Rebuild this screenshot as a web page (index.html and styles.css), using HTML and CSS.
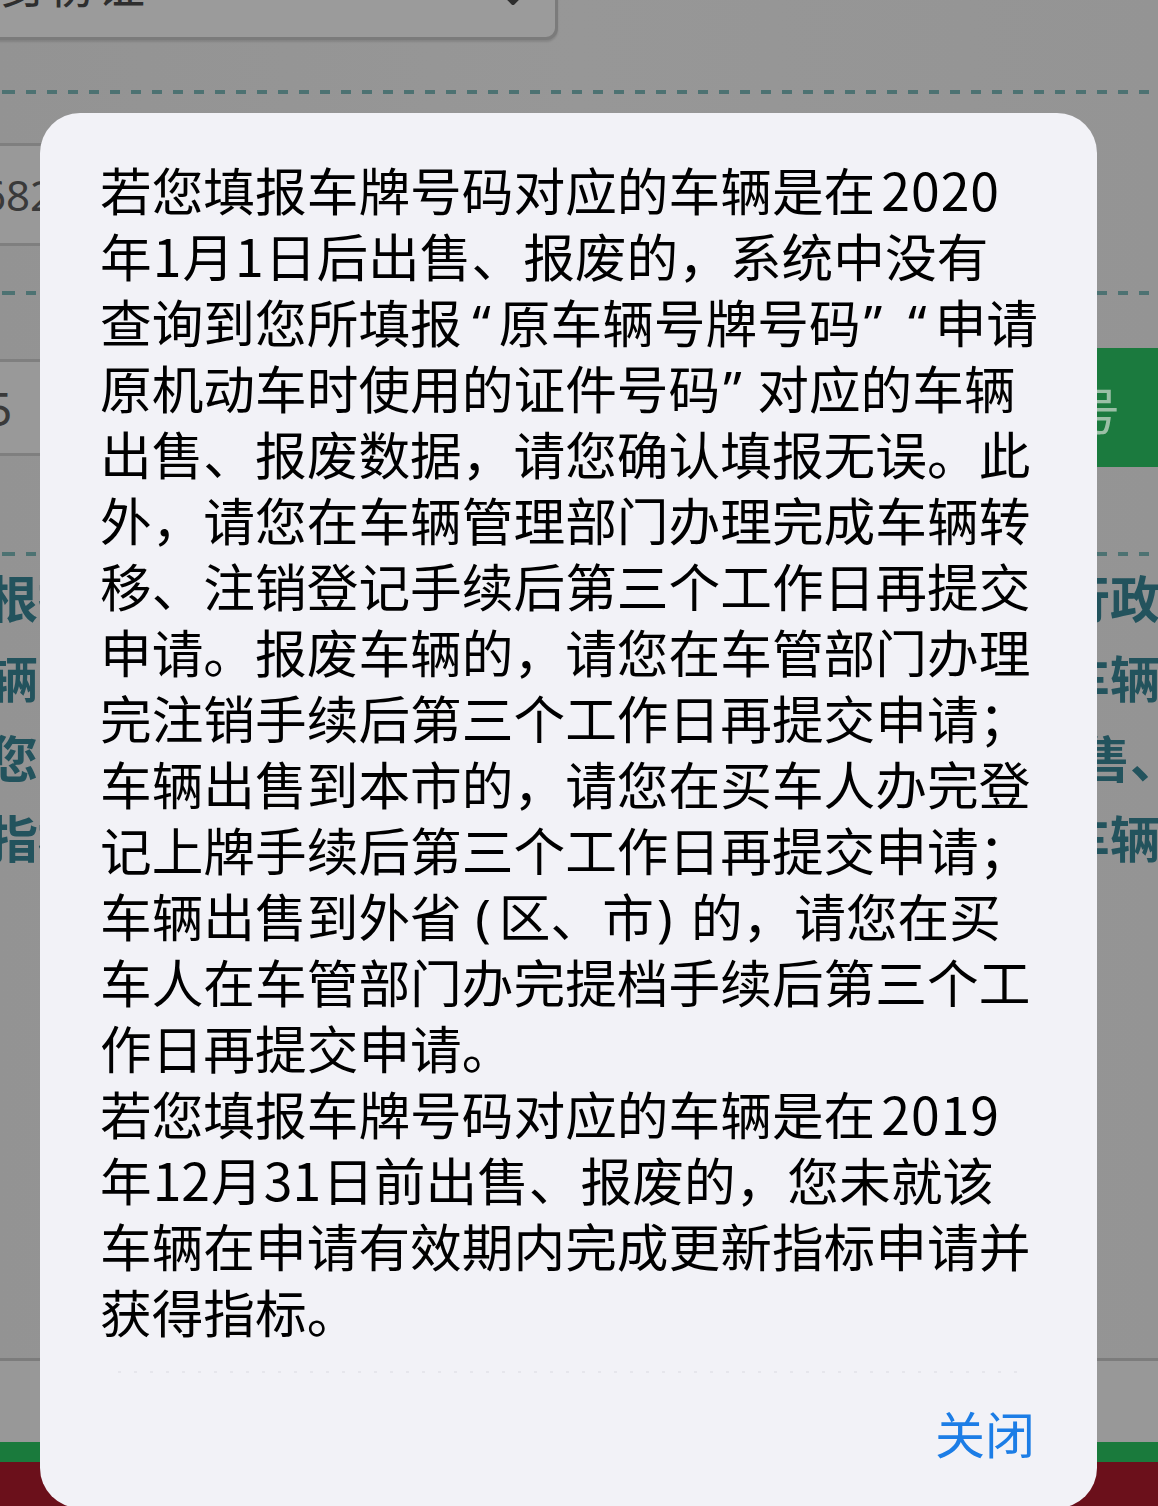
FILE: index.html
```html
<!DOCTYPE html>
<html lang="zh-CN">
<head>
<meta charset="utf-8">
<title>提示</title>
<link rel="stylesheet" href="styles.css">
</head>
<body>
<div class="page">
  <div class="sel-row">
    <div class="select">
      <span class="sel-text">身份证</span>
      <svg class="chev" width="24" height="14" viewBox="0 0 24 14"><path d="M3 2 L12 11 L21 2" fill="none" stroke="#2e2e2e" stroke-width="4" stroke-linecap="round" stroke-linejoin="round"/></svg>
    </div>
  </div>
  <div class="dash dash-a"></div>
  <div class="input input-a"><span class="in-text">5682</span></div>
  <div class="dash dash-b"></div>
  <div class="row-b">
    <div class="input input-b"><span class="in-text b">5</span></div>
    <div class="green-btn">号</div>
  </div>
  <div class="dash dash-c"></div>
  <div class="notes">
    <div class="note"><span>根据</span><span>行政</span></div>
    <div class="note"><span>辆</span><span>车辆</span></div>
    <div class="note r3"><span>您</span><span>出售、</span></div>
    <div class="note"><span>指标</span><span>车辆</span></div>
  </div>
  <div class="bottom">
    <div class="b-line"></div>
    <div class="b-grey"></div>
    <div class="b-green"></div>
    <div class="b-red"></div>
  </div>
</div>

<div class="modal">
  <div class="msg">
    <p>若您填报车牌号码对应的车辆是在<span class="yr">2020</span><br>年<span class="n">1</span>月<span class="n">1</span>日后出售、报废的，系统中没有<br>查询到您所填报<span class="q ql">“</span>原车辆号牌号码<span class="q qr">”</span><span class="q ql">“</span>申请<br>原机动车时使用的证件号码<span class="q qr">”</span>对应的车辆<br>出售、报废数据，请您确认填报无误。此<br>外，请您在车辆管理部门办理完成车辆转<br>移、注销登记手续后第三个工作日再提交<br>申请。报废车辆的，请您在车管部门办理<br>完注销手续后第三个工作日再提交申请；<br>车辆出售到本市的，请您在买车人办完登<br>记上牌手续后第三个工作日再提交申请；<br>车辆出售到外省<span class="q ql">(</span>区、市<span class="q qr">)</span>的，请您在买<br>车人在车管部门办完提档手续后第三个工<br>作日再提交申请。</p>
    <p>若您填报车牌号码对应的车辆是在<span class="yr">2019</span><br>年<span class="n">12</span>月<span class="n">31</span>日前出售、报废的，您未就该<br>车辆在申请有效期内完成更新指标申请并<br>获得指标。</p>
  </div>
  <div class="sep"></div>
  <div class="actions"><span class="close-btn">关闭</span></div>
</div>
</body>
</html>
```

FILE: styles.css
```css
html, body {
  margin: 0;
  padding: 0;
}
body {
  width: 1158px;
  height: 1506px;
  overflow: hidden;
  position: relative;
  background: #959595;
  font-family: "Noto Sans CJK SC", sans-serif;
}

/* ---------- dimmed page behind the dialog ---------- */
.page {
  height: 1506px;
  display: flex;
  flex-direction: column;
  background: linear-gradient(90deg, #939393 0%, #979797 50%, #949494 100%);
}
.sel-row {
  height: 40px;
  flex-shrink: 0;
}
.select {
  margin-top: -60px;
  margin-left: -12px;
  width: 570px;
  height: 100px;
  box-sizing: border-box;
  border: 3px solid #7b7b7b;
  border-radius: 12px;
  background: #9b9b9b;
  display: flex;
  align-items: flex-end;
  justify-content: space-between;
  padding: 0 30px 31px 10px;
  box-shadow: 0 2px 2px rgba(0,0,0,0.12);
}
.sel-text {
  font-size: 48px;
  line-height: 48px;
  color: #2e2e2e;
}
.chev {
  display: block;
}
.dash {
  height: 4px;
  flex-shrink: 0;
  background: repeating-linear-gradient(90deg, #4d7272 0 10px, transparent 10px 21px);
  background-position: 5px 0;
}
.dash-a { margin-top: 50px; }
.input {
  box-sizing: border-box;
  border-top: 3px solid #7f7f7f;
  border-bottom: 3px solid #7f7f7f;
  background: #999999;
  display: flex;
  align-items: center;
  flex-shrink: 0;
}
.input-a {
  margin-top: 49px;
  height: 103px;
  width: 1050px;
}
.in-text {
  margin-left: -42px;
  font-size: 42px;
  color: #3a3a3a;
  font-family: "Noto Sans", sans-serif;
}
.in-text.b {
  margin-left: -14px;
  font-size: 46px;
}
.dash-b { margin-top: 45px; }
.row-b {
  margin-top: 53px;
  height: 119px;
  display: flex;
  align-items: center;
  justify-content: space-between;
  flex-shrink: 0;
}
.input-b {
  height: 97px;
  width: 960px;
}
.green-btn {
  align-self: stretch;
  width: 160px;
  margin-right: -2px;
  background: #1b7a3e;
  color: #9bbfa6;
  font-size: 50px;
  display: flex;
  align-items: center;
  padding-left: 70px;
  box-sizing: border-box;
}
.dash-c { margin-top: 85px; }
.notes {
  flex-shrink: 0;
}
.note {
  display: flex;
  justify-content: space-between;
  margin: 0 -2px 0 -12px;
  height: 80px;
  line-height: 80px;
  font-size: 50px;
  font-weight: 700;
  color: #23535d;
}
.note.r3 {
  margin-right: -22px;
}
.bottom {
  margin-top: auto;
  flex-shrink: 0;
}
.b-line { height: 3px; background: #7c7c7c; }
.b-grey { height: 81px; background: #989898; }
.b-green { height: 20px; background: #1a7a3c; }
.b-red { height: 44px; background: #6b101b; }

/* ---------- dialog ---------- */
.modal {
  position: absolute;
  top: 113px;
  left: 40px;
  width: 1057px;
  height: 1395px;
  box-sizing: border-box;
  padding: 43px 62px 0 60px;
  background: #f2f2f7;
  border-radius: 40px;
}
.msg p {
  margin: 0;
  font-size: 51.7px;
  line-height: 66px;
  color: #000;
  white-space: nowrap;
}
.yr {
  padding-left: 6px;
  letter-spacing: 1px;
}
.n {
  padding: 0 1px;
}
.q {
  display: inline-block;
  width: 37px;
  line-height: 1;
  font-family: "Noto Sans", sans-serif;
}
.ql {
  text-align: right;
  padding-right: 8px;
  box-sizing: border-box;
}
.qr {
  text-align: left;
  padding-left: 3px;
  box-sizing: border-box;
}
.sep {
  margin: 27px 10px 0 18px;
  height: 2px;
  background: repeating-linear-gradient(90deg, #e6e6ec 0 3px, transparent 3px 16px);
}
.actions {
  margin-top: 26px;
  text-align: right;
}
.close-btn {
  font-size: 50px;
  line-height: 66px;
  color: #1c7de6;
}
```
